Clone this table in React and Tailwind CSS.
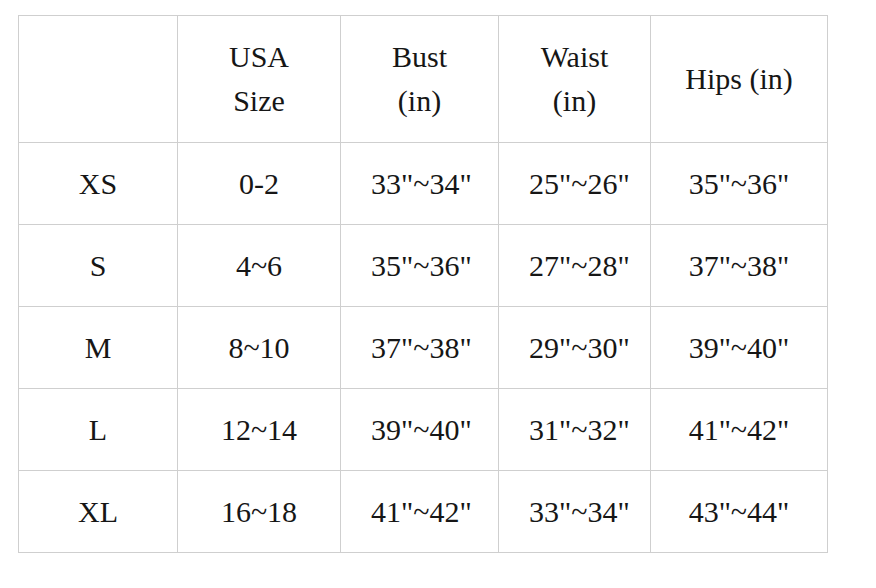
import React from "react";

const header = ["", "USA Size", "Bust (in)", "Waist (in)", "Hips (in)"];

const rows = [
  ["XS", "0-2", "33\"~34\"", "25\"~26\"", "35\"~36\""],
  ["S", "4~6", "35\"~36\"", "27\"~28\"", "37\"~38\""],
  ["M", "8~10", "37\"~38\"", "29\"~30\"", "39\"~40\""],
  ["L", "12~14", "39\"~40\"", "31\"~32\"", "41\"~42\""],
  ["XL", "16~18", "41\"~42\"", "33\"~34\"", "43\"~44\""],
];

const widths = ["w-[159px]", "w-[163px]", "w-[158px]", "w-[152px]", "w-[177px]"];

const cell =
  "border border-[#cfcfcf] px-[30px] text-center align-middle leading-[44px] font-normal";

const App = () => {
  return (
    <div className="w-[876px] h-[588px] bg-white pt-[15px] pl-[18px] font-['Liberation_Serif',serif] text-[30px] text-[#161616]">
      <table className="table-fixed border-collapse w-[810px]">
        <colgroup>
          {widths.map((w, i) => (
            <col key={i} className={w} />
          ))}
        </colgroup>
        <thead>
          <tr className="h-[127px]">
            {header.map((h, i) => (
              <th key={i} className={cell}>
                {h}
              </th>
            ))}
          </tr>
        </thead>
        <tbody>
          {rows.map((r) => (
            <tr key={r[0]} className="h-[82px]">
              {r.map((c, i) => (
                <td key={i} className={cell}>
                  {c}
                </td>
              ))}
            </tr>
          ))}
        </tbody>
      </table>
    </div>
  );
};

export default App;
